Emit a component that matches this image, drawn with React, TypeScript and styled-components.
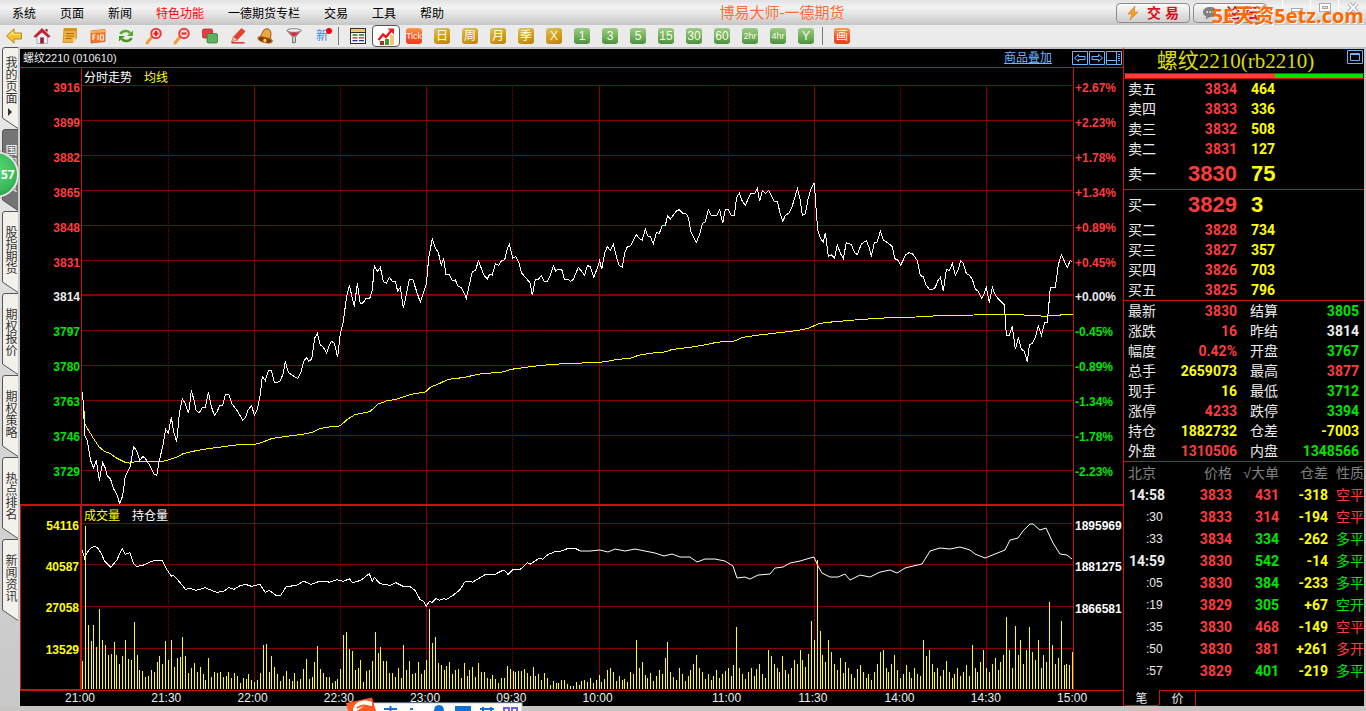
import React from "react";
import styled, { createGlobalStyle, css } from "styled-components";

const RED = "#ff3c3c";
const GREEN = "#00e600";
const YELLOW = "#ffff00";
const WHITE = "#ececec";
const FRAME = "#c8140a";
const GRID = "#860000";
const BLUE = "#6db3ff";

const ui = `"Liberation Sans", "Noto Sans CJK SC", sans-serif`;

const GlobalStyle = createGlobalStyle`
  * { box-sizing: border-box; }
  html, body { margin: 0; padding: 0; background: #c8c4c4; }
  body { font: 12px/16px ${ui}; color: #000; overflow: hidden; }
  button { font: inherit; color: inherit; margin: 0; padding: 0; border: 0; background: none; }
  table { border-collapse: collapse; border-spacing: 0; }
`;

/* ---------- shell ---------- */

const Shell = styled.div`
  position: relative;
  display: flex;
  flex-direction: column;
  height: 100vh;
  min-height: 700px;
  padding-bottom: 5px;
`;

const MenuBar = styled.header`
  display: flex;
  align-items: center;
  height: 25px;
  flex: none;
  background: linear-gradient(#e2e2e2, #f3f3f3 30%, #dedede 65%, #c6c6c6);
`;

const Menu = styled.nav`
  display: flex;
  gap: 24px;
  padding-left: 12px;
`;

const MenuItem = styled.button<{ $hot?: boolean }>`
  height: 24px;
  padding-top: 2px;
  white-space: nowrap;
  color: ${(p) => (p.$hot ? "#ff0000" : "#000")};
`;

const AppTitle = styled.h1`
  flex: 1;
  margin: 0;
  padding-left: 4px;
  text-align: center;
  font-size: 15px;
  line-height: 24px;
  font-weight: 400;
  color: #ff6c38;
`;

const Action = styled.button`
  display: flex;
  align-items: center;
  justify-content: center;
  gap: 8px;
  width: 74px;
  height: 20px;
  margin-right: 3px;
  border: 1px solid #8c8c8c;
  border-radius: 4px;
  background: linear-gradient(#fbfbfb, #e4e4e4 50%, #cfcfcf);
  font-size: 14px;
  font-weight: 700;
  color: #d8101c;
`;

const WindowButtons = styled.div`
  display: flex;
  align-self: flex-start;
  margin-left: 12px;
`;

const WindowButton = styled.button`
  display: flex;
  justify-content: center;
  width: 28px;
  height: 15px;
  padding-top: 2px;
  border-left: 1px solid #fff;
`;

const Watermark = styled.div`
  position: absolute;
  top: 2px;
  right: 2px;
  font: 700 20px/28px "Open Sans", "Noto Sans CJK SC", sans-serif;
  color: #ff6a00;
  text-shadow: 1px 1px 0 #fff;
`;

const ToolBar = styled.div`
  display: flex;
  align-items: center;
  height: 22px;
  flex: none;
  background: #ebebeb;
`;

const Tool = styled.button<{ $active?: boolean }>`
  display: flex;
  align-items: center;
  justify-content: center;
  width: 28px;
  height: 22px;
  ${(p) =>
    p.$active &&
    css`
      border: 1px solid #555;
      border-radius: 4px;
      background: #fff;
    `}
`;

const ToolGap = styled.span`
  width: 8px;
  height: 18px;
  border-left: 1px solid #7c7c7c;
  margin-left: 2px;
  margin-right: -2px;
`;

const tileColors = {
  gold: "linear-gradient(160deg, #d8c46a, #d2a21c 50%, #c08000)",
  green: "linear-gradient(#9ccc84, #6cae58 60%, #4c9040)",
  orange: "linear-gradient(#ff9c4c, #f4582c 50%, #e8401c)",
};

const Tile = styled.span<{ $tone: keyof typeof tileColors; $small?: boolean }>`
  display: flex;
  align-items: center;
  justify-content: center;
  width: 16px;
  height: 16px;
  border-radius: 3px;
  background: ${(p) => tileColors[p.$tone]};
  color: #fffbe8;
  font-size: ${(p) => (p.$small ? 9 : 12)}px;
  line-height: 16px;
  font-family: ${(p) => (p.$small ? `"Liberation Sans Narrow", ${ui}` : ui)};
  white-space: nowrap;
`;

const NewMark = styled.span`
  position: relative;
  font-size: 12px;
  line-height: 18px;
  color: #3c8ce8;
  &::after {
    content: "";
    position: absolute;
    top: 1px;
    right: -4px;
    width: 6px;
    height: 6px;
    border-radius: 50%;
    background: #ff0000;
  }
`;

const Workspace = styled.main`
  display: flex;
  flex: 1;
  min-height: 0;
  padding-right: 2px;
`;

/* ---------- left page tabs ---------- */

const SideBar = styled.aside`
  position: relative;
  width: 20px;
  flex: none;
  padding-left: 2px;
  background: linear-gradient(#eaeaea, #c8c8c8);
  border-right: 2px solid #cfcaca;
`;

const SideTab = styled.button<{ $active?: boolean }>`
  display: grid;
  width: 16px;
  height: 82px;
  color: ${(p) => (p.$active ? "#fff" : "#333")};
  > * {
    grid-area: 1 / 1;
  }
`;

const SideLabel = styled.span`
  display: flex;
  align-items: center;
  justify-content: center;
  gap: 4px;
  width: 16px;
  padding-bottom: 5px;
  writing-mode: vertical-rl;
  font-size: 12px;
  line-height: 14px;
`;

const Bubble = styled.div`
  position: absolute;
  left: -28px;
  top: 104px;
  width: 47px;
  height: 47px;
  padding-left: 27px;
  border: 2px solid #e4e4e4;
  border-radius: 50%;
  background: radial-gradient(circle at 50% 40%, #5cdc78, #38b858 62%, #1c8a3c);
  box-shadow: 0 0 2px #666;
  font: 700 12px/43px "Noto Sans", sans-serif;
  color: #fff;
`;

/* ---------- chart board ---------- */

const Board = styled.section`
  display: flex;
  flex-direction: column;
  flex: 1;
  min-width: 0;
  border-top: 2px solid #c6c2c2;
  background: #000;
  color: ${WHITE};
`;

const BoardHead = styled.div`
  display: flex;
  align-items: center;
  height: 19px;
  flex: none;
  padding-left: 3px;
  border-bottom: 1px solid ${FRAME};
`;

const Symbol = styled.span`
  flex: 1;
  font-size: 11px;
`;

const OverlayLink = styled.a`
  margin-right: 20px;
  color: ${BLUE};
  text-decoration: underline;
`;

const HeadButton = styled.button`
  display: block;
  width: 16px;
  height: 14px;
  margin-right: 1px;
`;

const Pane = styled.div<{ $share: number; $edge: number }>`
  display: grid;
  grid-template-columns: 62px minmax(0, 1fr) 50px;
  grid-template-rows: minmax(0, 1fr);
  flex: ${(p) => p.$share} 1 0;
  min-height: 0;
  border-bottom: ${(p) => p.$edge}px solid ${FRAME};
`;

const Axis = styled.div<{ $boxed?: boolean; $right?: boolean; $volume?: boolean }>`
  display: flex;
  flex-direction: column;
  grid-column: ${(p) => (p.$right ? 3 : 1)};
  grid-row: 1;
  padding: ${(p) => (p.$volume ? "12px 1px 6px" : "12px 1px 5px")};
  text-align: ${(p) => (p.$right ? "left" : "right")};
  border: 0 solid ${FRAME};
  border-width: ${(p) => (p.$boxed ? "0 2px 1px 1px" : p.$right ? "0 0 0 1px" : "0 1px 0 0")};
`;

const AxisLabel = styled.span<{ $color: string }>`
  flex: 1;
  font-weight: 700;
  line-height: 16px;
  color: ${(p) => p.$color};
`;

const Plot = styled.svg`
  grid-area: 1 / 2;
  display: block;
  width: 100%;
  height: 100%;
  path,
  polyline {
    fill: none;
    vector-effect: non-scaling-stroke;
    shape-rendering: crispEdges;
  }
`;

const Legend = styled.div`
  grid-area: 1 / 2;
  display: flex;
  align-self: start;
  gap: 12px;
  padding-top: 1px;
  padding-left: 2px;
  line-height: 18px;
`;

const LegendItem = styled.span<{ $color: string }>`
  color: ${(p) => p.$color};
`;

const TimeAxis = styled.div`
  display: flex;
  height: 15px;
  flex: none;
  padding-left: 45px;
  line-height: 15px;
`;

const TimeTick = styled.span<{ $span: number }>`
  flex: ${(p) => (p.$span ? `${p.$span} 1 0` : "0 0 66px")};
`;

/* ---------- quote panel ---------- */

const Quote = styled.aside`
  display: flex;
  flex-direction: column;
  width: 241px;
  flex: none;
  border-top: 2px solid #c6c2c2;
  border-left: 1px solid ${FRAME};
  background: #000;
  color: ${WHITE};
  font-size: 14px;
  line-height: 20px;
`;

const QuoteTitle = styled.div`
  display: flex;
  height: 25px;
  border-bottom: 1px solid ${FRAME};
  h2 {
    flex: 1;
    margin: 0;
    text-align: center;
    font: 400 21px/24px "Liberation Serif", "Noto Sans CJK SC", serif;
    color: #dcdc00;
  }
`;

const Balance = styled.div`
  display: flex;
  height: 5px;
  padding: 0 1px;
  border-bottom: 1px solid ${FRAME};
`;

const BalancePart = styled.span<{ $share: number; $color: string }>`
  flex: ${(p) => p.$share};
  background: ${(p) => p.$color};
`;

const Sheet = styled.table<{ $line?: boolean }>`
  width: 100%;
  table-layout: fixed;
  border-bottom: ${(p) => (p.$line ? `1px solid ${FRAME}` : "0")};
  th,
  td {
    padding: 0;
    text-align: left;
    font-weight: 400;
    white-space: nowrap;
  }
`;

const Row = styled.tr<{ $height: number }>`
  height: ${(p) => p.$height}px;
`;

const Name = styled.th<{ $indent: number }>`
  && {
    padding-left: ${(p) => p.$indent}px;
  }
`;

const Num = styled.td<{ $color: string; $size?: number; $left?: boolean }>`
  && {
    padding-left: ${(p) => (p.$left ? 14 : 0)}px;
    text-align: ${(p) => (p.$left ? "left" : "right")};
    font: 700 ${(p) => p.$size || 14}px/20px
      ${(p) => (p.$size ? `"Liberation Sans"` : "Roboto")}, sans-serif;
    color: ${(p) => p.$color};
  }
`;

const Head = styled.th<{ $right?: boolean; $indent?: number }>`
  && {
    padding-left: ${(p) => p.$indent || 0}px;
    text-align: ${(p) => (p.$right ? "right" : "left")};
    color: #808080;
  }
`;

const TimeCell = styled.td<{ $full: boolean }>`
  && {
    padding-left: ${(p) => (p.$full ? 5 : 22)}px;
    font: ${(p) => (p.$full ? "700 14px" : "400 12px")} / 20px
      ${(p) => (p.$full ? "Roboto" : `"Liberation Sans"`)}, sans-serif;
  }
`;

const Kind = styled.td<{ $color: string }>`
  && {
    padding-left: 8px;
    color: ${(p) => p.$color};
  }
`;

const TabStrip = styled.div`
  display: flex;
  height: 16px;
  margin-top: auto;
  font-size: 12px;
  line-height: 14px;
`;

const Tab = styled.button<{ $active?: boolean }>`
  width: 36px;
  padding-top: ${(p) => (p.$active ? 2 : 1)}px;
  border: 0 solid ${FRAME};
  border-width: ${(p) => (p.$active ? "0 1px 1px 0" : "1px 1px 0 0")};
  border-radius: ${(p) => (p.$active ? "0 0 3px 3px" : "0")};
`;

const TabRest = styled.span`
  flex: 1;
  border-top: 1px solid ${FRAME};
`;

const ImeBar = styled.div`
  position: absolute;
  left: 345px;
  bottom: 0;
  width: 178px;
  height: 14px;
  overflow: hidden;
`;

/* ---------- data ---------- */

const TICKS: [string, number][] = [
  ["21:00", 30], ["21:30", 30], ["22:00", 30], ["22:30", 30], ["23:00", 30], ["09:30", 30],
  ["10:00", 45], ["11:00", 30], ["11:30", 30], ["14:00", 30], ["14:30", 30], ["15:00", 0],
];

const PRICES = [3916, 3899, 3882, 3865, 3848, 3831, 3814, 3797, 3780, 3763, 3746, 3729];
const PERCENTS = ["+2.67%", "+2.23%", "+1.78%", "+1.34%", "+0.89%", "+0.45%", "+0.00%", "-0.45%", "-0.89%", "-1.34%", "-1.78%", "-2.23%"];

/* Each trace is cut into trading stretches with their own origin and unit; the plot's unit is a third of a pixel. */
type Stretch = { x: number; y: number; unit?: number; points: string };

const priceTrace: Stretch[] = [
  { x: -6, y: 486, points: "7,487 10,520 13,590 14,617 22,632 32,692 41,715 49,692 58,752 68,698 76,715 82,738 92,748 100,775 110,793 119,821 128,798 136,738 150,712 161,650 170,662 179,692 188,680 195,684 210,708 222,732 230,737 238,692 248,650 257,598 265,610 274,562 281,605 290,637 298,550 307,506 316,522 326,550 334,482 342,510 348,540 357,550 368,532 376,532 385,487 394,530 403,556 412,544 419,526 428,526 436,493 446,493 456,522 470,540 488,570 496,564 504,540 515,527 523,556 532,538 540,500 547,440 556,452 565,422 574,422 583,458 592,458 601,452 610,430 616,394 625,428 640,438 653,445 662,430 670,398 679,382 686,394 695,388 704,325 712,310 721,345 730,352 740,370 748,346 754,334 763,340 773,382 781,310 790,275 799,205 808,166 817,205 823,230 832,160 841,222 850,218 858,206 869,206 877,180 883,106 892,124 901,112 910,155 919,160 928,142 937,154 946,154 953,184 961,172 970,235 979,195 988,148 998,148 1010,185 1021,217 1030,188 1039,163 1046,85 1057,25" },
  { x: 1014, y: 306, points: "37,205 44,230 55,248 64,286 71,266 78,314 88,314 97,332 106,330 115,350 124,352 139,385 148,345 157,304 167,302 175,272 185,298 193,318 202,327 209,313 217,315 226,281 236,286 245,272 254,270 262,236 268,224 278,264 287,260 296,276 304,308 316,322 330,338 337,376 346,328 355,328 364,316 373,334 382,334 391,316 400,287 407,303 416,298 425,298 433,328 443,328 452,334 460,328 475,292 484,303 494,316 502,287 511,290 521,322 530,300 539,272 545,298 554,250 562,230 571,242 580,224 589,260 597,286 607,292 614,250 622,230 632,228 649,194 658,206 667,210 676,176 683,198 691,200 700,222 709,188 718,190 727,166 736,166 743,137 751,148 768,124 778,119 788,130 797,130 805,142 812,184 829,217 838,196 847,160 856,155 865,119 874,136 890,136 899,119 908,160 916,119 925,119 934,136 943,136 950,82 958,70 967,94 976,106 992,70 1004,70 1012,56 1019,94 1027,62 1036,70 1046,62 1062,94 1073,96 1080,130 1088,154 1096,137 1106,130 1115,114 1124,84 1132,56 1140,88 1147,136 1156,132 1164,88 1173,56 1183,38" },
  { x: 2154, y: 306, points: "43,38 47,100 53,180 61,205 70,217 76,188 85,260 94,254 104,265 112,224 121,250 130,265 139,218 154,224 164,248 172,254 184,222 199,212 207,232 214,260 223,218 232,216 241,182 250,210 265,220 277,230 284,266 293,270 302,286 310,270 317,254 328,248 338,252 352,272 361,317 370,320 378,345 388,358 398,358 406,352 414,332 421,322 430,364 439,298 448,302 457,281 466,317 475,298 482,272 490,280 499,311 508,316 517,328 526,358 535,364 545,385 552,372 559,352 568,398 577,352 586,376 600,392 613,404 619,496 628,496 637,470 646,538 655,502 664,538 673,544 682,575 688,525 697,520 707,500 715,469 724,496 734,457 742,457 751,352 766,352 775,285 784,254 793,274 802,292 811,272 817,278" },
];

const averageTrace: Stretch[] = [
  { x: -6, y: 486, points: "10,510 13,560 14,582 25,600 40,625 58,652 75,665 90,670 105,682 135,697 152,700 165,695 245,695 265,690 290,682 310,671 345,663 385,656 440,649 470,645 525,643 545,638 575,626 620,619 670,613 700,606 720,596 750,591 780,588 800,570 825,554 870,545 895,522 920,513 945,509 990,494 1037,486 1050,472 1080,460" },
  { x: 1014, y: 306, points: "60,640 85,628 130,623 180,612 250,606 275,598 340,589 400,583 470,580 550,576 590,569 635,564 655,556 690,550 735,546 755,539 810,532 860,524 890,517 945,513 965,503 1010,496 1080,488 1130,482 1165,475 1200,460" },
  { x: 2154, y: 306, points: "60,461 75,458 130,453 190,448 240,445 290,442 360,441 430,436 545,435 550,433 640,433 700,437 740,439 745,436 780,436 785,433 820,433" },
];

const interestTrace: Stretch[] = [
  { x: -6, y: -3, points: "7,136 14,160 22,142 31,130 42,124 52,128 62,142 74,168 92,187 110,166 127,130 136,148 150,143 160,175 170,184 188,181 220,167 247,166 262,196 274,213 280,211 300,232 316,253 330,250 348,256 375,248 410,262 432,258 446,248 462,253 480,242 497,238 515,244 540,238 556,262 568,256 588,271 602,271 618,246 655,239 670,228 692,238 715,230 750,231 772,224 790,229 808,221 818,233 842,226 868,206 877,229 883,217 900,236 930,241 948,233 968,243 988,243 1005,256 1020,283 1030,288 1039,304 1048,288 1056,292 1068,280 1078,286 1090,281 1100,283 1120,270 1140,254 1155,230 1178,231 1215,209 1245,208 1268,196 1275,197 1284,208 1298,194 1322,192 1342,173 1352,177 1375,161 1388,162 1405,148 1425,140 1440,139 1465,130 1485,130 1500,137" },
  { x: -246, y: -1518, unit: 3, points: "580,551 590,551 600,550 608,552 615,549 625,551 635,549 645,551 655,553 664,556 672,554 680,557 690,557 697,562 705,559 715,559 725,561 733,566 737,578 745,577 750,579 758,575 770,574 775,568 783,567 790,563 800,561 810,558 814,557 818,566 822,573 830,577 838,577 845,574 850,580 860,575 870,577 880,572 890,570 897,573 905,568 913,566 922,564 930,551 940,548 950,549 960,547 970,550 975,554 985,558 995,554 1005,550 1010,540 1018,538 1023,531 1030,524 1033,524 1040,530 1046,528 1053,543 1060,554 1067,555 1072,559" },
];

/* Bar tops by the minute: the night session in plot units, the day session in whole pixels above its base line. */
const NIGHT_TOPS = [
  468, 63, 360, 408, 360, 426, 312, 405, 420, 450, 447, 411, 450, 477, 453, 405, 462, 465, 351, 450, 495, 498, 516, 513, 495, 500, 471, 453, 477, 408,
  465, 405, 486, 459, 456, 396, 453, 504, 489, 474, 501, 486, 507, 525, 459, 516, 501, 504, 501, 516, 513, 501, 519, 504, 513, 534, 519, 522, 507, 525,
  531, 525, 504, 420, 417, 501, 453, 486, 507, 528, 513, 498, 522, 528, 504, 528, 522, 492, 462, 522, 516, 471, 423, 492, 504, 516, 516, 534, 528, 522,
  492, 390, 381, 432, 438, 495, 489, 465, 531, 498, 495, 468, 381, 444, 426, 468, 468, 504, 504, 516, 489, 519, 420, 495, 468, 507, 504, 471, 507, 495,
  465, 312, 414, 396, 474, 480, 495, 483, 471, 507, 495, 492, 519, 474, 513, 495, 486, 516, 474, 501, 501, 519, 522, 510, 522, 534, 519, 519, 483, 492,
  498, 501, 498, 498, 492, 504, 513, 486, 513, 507, 525, 504, 519, 540, 528, 534, 534, 525, 525, 537, 543, 543, 531, 540,
];
const DAY_BASE = 689;
const DAY_TOPS = [
  681, 680, 682, 678, 683, 680, 675, 682, 679, 670, 668, 672, 681, 676, 680, 679, 682, 672, 674, 640, 668, 662, 675, 678, 673, 681, 676, 670, 674, 658,
  642, 672, 677, 680, 668, 674, 681, 676, 670, 664, 655, 668, 672, 679, 674, 680, 676, 670, 678, 674, 671, 668, 676, 665, 627, 668, 674, 679, 672, 668,
  676, 669, 664, 674, 678, 650, 656, 664, 668, 672, 656, 670, 674, 668, 660, 664, 650, 660, 667, 654, 621, 640, 560, 631, 655, 662, 640, 652, 664, 670,
  658, 673, 662, 668, 674, 678, 669, 665, 672, 678, 674, 680, 672, 664, 652, 650, 668, 672, 664, 655, 670, 678, 674, 665, 672, 678, 668, 674, 676, 640,
  656, 650, 664, 672, 668, 676, 670, 661, 672, 678, 674, 668, 676, 672, 665, 676, 645, 668, 672, 662, 650, 668, 672, 664, 658, 670, 662, 655, 617, 650,
  668, 626, 655, 640, 664, 650, 627, 652, 660, 640, 668, 655, 662, 602, 645, 664, 658, 621, 665, 664, 665, 652,
];
const VOLUME_TOPS = [...NIGHT_TOPS, ...DAY_TOPS.map((y) => 552 - (DAY_BASE - y) * 3)];

const ASKS: [string, number, number][] = [["卖五", 3834, 464], ["卖四", 3833, 336], ["卖三", 3832, 508], ["卖二", 3831, 127], ["卖一", 3830, 75]];
const BIDS: [string, number, number][] = [["买一", 3829, 3], ["买二", 3828, 734], ["买三", 3827, 357], ["买四", 3826, 703], ["买五", 3825, 796]];

const STATS: [string, string, string, string, string, string][] = [
  ["最新", "3830", RED, "结算", "3805", GREEN],
  ["涨跌", "16", RED, "昨结", "3814", WHITE],
  ["幅度", "0.42%", RED, "开盘", "3767", GREEN],
  ["总手", "2659073", YELLOW, "最高", "3877", RED],
  ["现手", "16", YELLOW, "最低", "3712", GREEN],
  ["涨停", "4233", RED, "跌停", "3394", GREEN],
  ["持仓", "1882732", YELLOW, "仓差", "-7003", YELLOW],
  ["外盘", "1310506", RED, "内盘", "1348566", GREEN],
];

const TRADES: [string, number, number, string, string, string][] = [
  ["14:58", 3833, 431, "-318", "空平", RED],
  [":30", 3833, 314, "-194", "空平", RED],
  [":33", 3834, 334, "-262", "多平", GREEN],
  ["14:59", 3830, 542, "-14", "多平", GREEN],
  [":05", 3830, 384, "-233", "多平", GREEN],
  [":19", 3829, 305, "+67", "空开", GREEN],
  [":35", 3830, 468, "-149", "空平", RED],
  [":50", 3830, 381, "+261", "多开", RED],
  [":57", 3829, 401, "-219", "多平", GREEN],
];

const MENUS = ["系统", "页面", "新闻", "特色功能", "一德期货专栏", "交易", "工具", "帮助"];
const PAGES = ["我的页面", "国内期货", "股指期货", "期权报价", "期权策略", "热点排名", "新闻资讯"];

/* ---------- toolbar drawings ---------- */

const Glyph = ({ children }: { children: React.ReactNode }) => (
  <svg width="18" height="18" viewBox="0 0 18 18" aria-hidden="true">{children}</svg>
);

const Magnifier = ({ plus }: { plus?: boolean }) => (
  <Glyph>
    <path d="M2 16l5-6" stroke="#f0a030" strokeWidth="3" strokeLinecap="round" />
    <circle cx="11" cy="6.5" r="4.8" fill="#ffd8d8" stroke="#e84040" strokeWidth="2" />
    <path d={plus ? "M8.5 6.5h5M11 4v5" : "M8.5 6.5h5"} stroke="#e02020" strokeWidth="2" />
  </Glyph>
);

const DRAWINGS: [string, React.ReactNode][] = [
  ["后退", <Glyph><path d="M1.5 9L9 1.800V6h7.500v6H9v4.200z" fill="#f6c22c" stroke="#b88a18" strokeLinejoin="round" /><path d="M4 8.500L8 5v2.500h7" stroke="#fff0a0" fill="none" /></Glyph>],
  ["首页", <Glyph><path d="M4 8v8.500h10.500V8L9 3.500z" fill="#e8ecf4" stroke="#9098a8" strokeWidth=".7" /><path d="M.8 9.500L9 1.500l8.200 8-2 .8L9 5l-6.200 5.300z" fill="#d81830" stroke="#901020" strokeWidth=".6" /><path d="M12.500 2h2v3.500l-2-2z" fill="#a01828" /><path d="M7.200 10.500h3.600v6H7.200z" fill="#902030" /></Glyph>],
  ["便笺", <Glyph><path d="M3 1.500h12.500v10L12 15.500H2z" fill="#f0b040" stroke="#c88820" strokeWidth=".7" /><path d="M3 1.500h12.500v2.500H3z" fill="#d89020" /><path d="M5 6.500h8M5 9h8M4.500 11.500h6" stroke="#a87010" /><path d="M15.500 11.500H12v4z" fill="#ffe0a0" /></Glyph>],
  ["F10", <Glyph><path d="M2 4l14-1.500v12L2 16z" fill="#f07830" stroke="#c85010" strokeWidth=".7" /><path d="M2 4l14-1.500v2.500L2 6.500z" fill="#ffb050" /><path d="M4 13V8h2.500M4 10.500h2M9 8v5M11.500 8h3v5h-3z" stroke="#fff4e0" strokeWidth="1.200" fill="none" /></Glyph>],
  ["刷新", <Glyph><path d="M3.500 7C5 3.500 11 3 13 6" stroke="#58a82c" strokeWidth="2.600" fill="none" /><path d="M16 3.500v5.500h-6z" fill="#58a82c" /><path d="M14.500 11C13 14.500 7 15 5 12" stroke="#489820" strokeWidth="2.600" fill="none" /><path d="M2 14.500V9h6z" fill="#489820" /></Glyph>],
  ["放大", <Magnifier plus />],
  ["缩小", <Magnifier />],
  ["叠加", <Glyph><rect x="1.500" y="2" width="10" height="9" rx="1.500" fill="#e83c3c" stroke="#a82020" strokeWidth=".7" /><rect x="6" y="6.500" width="10.500" height="9.500" rx="1.500" fill="#60b060" stroke="#307030" strokeWidth=".7" /></Glyph>],
  ["画线", <Glyph><path d="M2.500 15.800h13" stroke="#e03030" strokeWidth="1.500" /><path d="M12.500 1l4 3.500-8 8.500-4-3.500z" fill="#e84030" /><path d="M4.500 9.500l4 3.500-6 2z" fill="#f0c888" stroke="#804018" strokeWidth=".5" /></Glyph>],
  ["预警", <Glyph><g transform="rotate(14 9 9)"><path d="M9 1.500c3 .5 4.500 3 4.500 6 0 2 .8 3.500 3 5H1.500c2.200-1.500 3-3 3-5 0-3 1.500-5.500 4.500-6z" fill="#f0a840" stroke="#804010" strokeWidth=".8" /><ellipse cx="9" cy="13" rx="7.200" ry="2.800" fill="#7c3c10" stroke="#c87820" /><circle cx="9" cy="13.500" r="1.700" fill="#f8d060" /></g></Glyph>],
  ["筛选", <Glyph><path d="M2 3.500L7.500 10v6l3-.5V10L16 3.500z" fill="#c8ccd0" stroke="#606468" strokeWidth=".8" /><ellipse cx="9" cy="3.500" rx="7" ry="1.800" fill="#f4f4f4" stroke="#606468" strokeWidth=".8" /><path d="M4 5.500h10L9 10z" fill="#e02838" /></Glyph>],
];

const Sheets = () => (
  <Glyph>
    <rect x="1.500" y="1.500" width="15" height="15" fill="#fff" stroke="#303030" />
    <path d="M2 3.500h14" stroke="#f0b860" strokeWidth="2.500" />
    <path d="M2 5.500h14" stroke="#303030" />
    <path d="M3.500 8h5M10 8h5" stroke="#108010" strokeWidth="1.300" />
    <path d="M3.500 10.800h5M10 10.800h5" stroke="#c02020" strokeWidth="1.300" />
    <path d="M3.500 13.600h5M10 13.600h5" stroke="#2030a0" strokeWidth="1.300" />
  </Glyph>
);

const TrendIcon = () => (
  <Glyph>
    <path d="M3 14h4v4H3z" fill="#a83020" /><path d="M8 12h4v6H8z" fill="#3c9830" /><path d="M13 8h4v10h-4z" fill="#f0c878" />
    <path d="M1.500 13L6 7.500l3 2.500 5-6" stroke="#f01818" strokeWidth="2.400" fill="none" /><path d="M10.500 1.500H17v6z" fill="#f01818" />
  </Glyph>
);

const TILES: [string, keyof typeof tileColors, boolean?][] = [
  ["Tick", "orange", true], ["日", "gold"], ["周", "gold"], ["月", "gold"], ["季", "gold"], ["X", "gold"],
  ["1", "green"], ["3", "green"], ["5", "green"], ["15", "green"], ["30", "green"], ["60", "green"],
  ["2hr", "green", true], ["4hr", "green", true], ["Y", "green"],
];

/* ---------- charts ---------- */

const W = 2973;
const axisColor = (i: number) => (i < 6 ? RED : i === 6 ? WHITE : GREEN);

const Trace = ({ parts, color }: { parts: Stretch[]; color: string }) => (
  <>
    {parts.map((s) => (
      <g key={s.x} transform={`translate(${s.x} ${s.y}) scale(${s.unit || 1})`}>
        <polyline points={s.points} stroke={color} strokeWidth="1" />
      </g>
    ))}
  </>
);

const TimeGrid = ({ top, bottom }: { top: number; bottom: number }) => {
  let minutes = 0;
  return (
    <>
      {TICKS.slice(0, -1).map(([label, span], i) => {
        const x = (W * minutes) / 345;
        minutes += span;
        if (!i) return null;
        const solid = ["22:00", "23:00", "10:00", "11:30", "14:30"].includes(label);
        return <path key={label} d={`M${x} ${top}V${bottom}`} stroke={GRID} strokeWidth="1" strokeDasharray={solid ? undefined : "1 1"} />;
      })}
    </>
  );
};

const PricePlot = () => (
  <Plot viewBox={`0 0 ${W} 1308`} preserveAspectRatio="none" role="img" aria-label="分时走势">
    {PRICES.map((p, i) => (
      <path key={p} d={`M0 ${i === 6 ? 681 : 53 + i * 105}H${W}`} stroke={GRID} strokeWidth={i === 6 ? 2 : 1} />
    ))}
    <TimeGrid top={51} bottom={1308} />
    <Trace parts={averageTrace} color={YELLOW} />
    <Trace parts={priceTrace} color="#fff" />
  </Plot>
);

const VolumePlot = () => (
  <Plot viewBox={`0 0 ${W} 552`} preserveAspectRatio="none" role="img" aria-label="成交量">
    <path d={`M0 52H${W}M0 176H${W}M0 301H${W}M0 427H${W}`} stroke={GRID} strokeWidth="1" />
    <TimeGrid top={0} bottom={552} />
    <Trace parts={interestTrace} color="#fff" />
    <path
      d={VOLUME_TOPS.map((top, i) => `M${Math.round(1 + i * 8.61)} ${top - 3}V549`).join("")}
      stroke={YELLOW}
      strokeWidth="1"
    />
  </Plot>
);

const Depth = ({ rows }: { rows: [string, number, number][] }) => (
  <Sheet $line>
    <colgroup><col width="60" /><col width="53" /><col /></colgroup>
    <tbody>
      {rows.map(([name, price, lots]) => {
        const best = name.endsWith("一");
        return (
          <Row key={name} $height={best ? 30 : 20}>
            <Name $indent={4}>{name}</Name>
            <Num $color={RED} $size={best ? 22 : undefined}>{price}</Num>
            <Num $color={YELLOW} $size={best ? 22 : undefined} $left>{lots}</Num>
          </Row>
        );
      })}
    </tbody>
  </Sheet>
);

export default function App() {
  return (
    <Shell>
      <GlobalStyle />
      <MenuBar>
        <Menu>
          {MENUS.map((m) => <MenuItem key={m} $hot={m === "特色功能"}>{m}</MenuItem>)}
        </Menu>
        <AppTitle>博易大师-一德期货</AppTitle>
        <Action>
          <svg width="12" height="16" viewBox="0 0 12 16" aria-hidden="true"><path d="M8 1L1 9h4l-2 6 8-8H7z" fill="#ffa020" stroke="#c87820" strokeWidth=".6" /></svg>
          交 易
        </Action>
        <Action>
          <svg width="16" height="14" viewBox="0 0 16 14" aria-hidden="true"><path d="M8 1c4 0 7 2 7 5.200S12 11 8 11l-4.500 2.500.8-3C2 9.500 1 8 1 6.200 1 3 4 1 8 1z" fill="#808080" /><path d="M4.500 6h1.500M7.500 6H9M10.500 6H12" stroke="#fff" strokeWidth="1.500" /></svg>
          论 坛
        </Action>
        <WindowButtons>
          <WindowButton aria-label="最小化"><svg width="14" height="12"><rect x="1.500" y="6.500" width="11" height="3" fill="#fff" stroke="#a8a8a8" /></svg></WindowButton>
          <WindowButton aria-label="最大化"><svg width="14" height="12"><rect x="1.500" y="1.500" width="11" height="8" fill="#fff" stroke="#a8a8a8" /><rect x="4.500" y="4.500" width="5" height="2" fill="#ddd" stroke="#a8a8a8" /></svg></WindowButton>
          <WindowButton aria-label="关闭"><svg width="14" height="12"><path d="M3 1.500l8 8.500M11 1.500L3 10" stroke="#a0a0a0" strokeWidth="4" /><path d="M3 1.500l8 8.500M11 1.500L3 10" stroke="#fff" strokeWidth="2" /></svg></WindowButton>
        </WindowButtons>
      </MenuBar>
      <ToolBar>
        {DRAWINGS.map(([label, icon]) => <Tool key={label} aria-label={label}>{icon}</Tool>)}
        <Tool><NewMark>新</NewMark></Tool>
        <ToolGap />
        <Tool aria-label="报价"><Sheets /></Tool>
        <Tool $active aria-label="分时"><TrendIcon /></Tool>
        {TILES.map(([label, tone, small]) => (
          <Tool key={label}><Tile $tone={tone} $small={small}>{label}</Tile></Tool>
        ))}
        <ToolGap />
        <Tool><Tile $tone="orange">画</Tile></Tool>
      </ToolBar>
      <Workspace>
        <SideBar>
          {PAGES.map((page, i) => (
            <SideTab key={page} $active={i === 1}>
              <svg width="16" height="82" aria-hidden="true">
                <path d="M16 .5H3Q.5.5.5 3V71L16 81.500" fill={i === 1 ? "#747474" : "#f2f1ec"} stroke="#555" />
              </svg>
              <SideLabel>
                {page}
                {i === 0 && <svg width="6" height="8" aria-hidden="true"><path d="M1 0v8l4-4z" fill="#333" /></svg>}
              </SideLabel>
            </SideTab>
          ))}
          <Bubble>57</Bubble>
        </SideBar>
        <Board>
          <BoardHead>
            <Symbol>螺纹2210 (010610)</Symbol>
            <OverlayLink href="#overlay">商品叠加</OverlayLink>
            <HeadButton aria-label="上一个"><svg width="16" height="14"><path d="M.5.500h15v13H.5zM2.500 7L6.500 3.500v2h6.500v3H6.500v2z" fill="none" stroke={BLUE} /></svg></HeadButton>
            <HeadButton aria-label="下一个"><svg width="16" height="14"><path d="M.5.500h15v13H.5zM13.500 7L9.500 3.500v2H3v3h6.500v2z" fill="none" stroke={BLUE} /></svg></HeadButton>
            <HeadButton aria-label="布局"><svg width="16" height="14"><path d="M.5.500h15v13H.5zM.5 9.500h10M10.500.5v13M12 3.500h2M12 5.500h2M12 7.500h2M12 9.500h2" fill="none" stroke={BLUE} /></svg></HeadButton>
          </BoardHead>
          <Pane $share={438} $edge={2}>
            <Axis>{PRICES.map((p, i) => <AxisLabel key={p} $color={axisColor(i)}>{p}</AxisLabel>)}</Axis>
            <PricePlot />
            <Legend>
              <LegendItem $color="#fff">分时走势</LegendItem>
              <LegendItem $color={YELLOW}>均线</LegendItem>
            </Legend>
            <Axis $right>{PERCENTS.map((p, i) => <AxisLabel key={p} $color={axisColor(i)}>{p}</AxisLabel>)}</Axis>
          </Pane>
          <Pane $share={185} $edge={1}>
            <Axis $boxed $volume>{[54116, 40587, 27058, 13529].map((v) => <AxisLabel key={v} $color={YELLOW}>{v}</AxisLabel>)}</Axis>
            <VolumePlot />
            <Legend>
              <LegendItem $color={YELLOW}>成交量</LegendItem>
              <LegendItem $color="#fff">持仓量</LegendItem>
            </Legend>
            <Axis $right $volume>{["1895969", "1881275", "1866581", ""].map((v) => <AxisLabel key={v} $color="#fff">{v}</AxisLabel>)}</Axis>
          </Pane>
          <TimeAxis>{TICKS.map(([label, span]) => <TimeTick key={label} $span={span}>{label}</TimeTick>)}</TimeAxis>
        </Board>
        <Quote>
          <QuoteTitle>
            <h2>螺纹2210(rb2210)</h2>
            <HeadButton aria-label="最大化"><svg width="16" height="14"><path d="M.5.500h15v13H.5zM3.500 3.500h9v7h-9zM3.500 4.500h9" fill="none" stroke={BLUE} /></svg></HeadButton>
          </QuoteTitle>
          <Balance>
            <BalancePart $share={150} $color={RED} />
            <BalancePart $share={88} $color={GREEN} />
          </Balance>
          <Depth rows={ASKS} />
          <Depth rows={BIDS} />
          <Sheet $line>
            <colgroup><col width="44" /><col width="69" /><col width="60" /><col width="62" /><col /></colgroup>
            <tbody>
              {STATS.map(([a, av, ac, b, bv, bc]) => (
                <Row key={a} $height={20}>
                  <Name $indent={4}>{a}</Name><Num $color={ac}>{av}</Num>
                  <Name $indent={13}>{b}</Name><Num $color={bc}>{bv}</Num><td />
                </Row>
              ))}
            </tbody>
          </Sheet>
          <Sheet>
            <colgroup><col width="50" /><col width="58" /><col width="47" /><col width="49" /><col /></colgroup>
            <thead>
              <Row $height={22}>
                <Head $indent={4}>北京</Head><Head $right>价格</Head><Head $right>√大单</Head><Head $right>仓差</Head><Head $indent={8}>性质</Head>
              </Row>
            </thead>
            <tbody>
              {TRADES.map(([time, price, lots, change, kind, color]) => (
                <Row key={time} $height={22}>
                  <TimeCell $full={time.length > 3}>{time}</TimeCell>
                  <Num $color={RED}>{price}</Num><Num $color={color}>{lots}</Num><Num $color={YELLOW}>{change}</Num>
                  <Kind $color={color}>{kind}</Kind>
                </Row>
              ))}
            </tbody>
          </Sheet>
          <TabStrip><Tab $active>笔</Tab><Tab>价</Tab><TabRest /></TabStrip>
        </Quote>
      </Workspace>
      <Watermark>5E天资5etz.com</Watermark>
      <ImeBar>
        <svg width="178" height="14" aria-hidden="true">
          <rect x="22" y="6" width="155" height="14" fill="#fff" stroke="#b8d0e8" />
          <path d="M1 6L27 .5l4 13.500H3z" fill="#f85c20" />
          <path d="M27 5C18 1 8 5 8 14h4c6-5 8-6 15-5z" fill="#fff" />
          <path d="M12 11c4-3 9-3 13-1" stroke="#f85c20" strokeWidth="2" fill="none" />
          <path d="M39 12h13M45.500 9v5M65 12h3M90 14c0-4 1-5 4-5s4 1 4 5zM111 10h14v4h-14zM135 12h14M138 10v4M146 10v4" stroke="#1470d8" strokeWidth="2" fill="#1470d8" />
          <path d="M159 14v-3h5v3M167 14v-3h5v3" stroke="#7060e8" strokeWidth="2" fill="none" />
        </svg>
      </ImeBar>
    </Shell>
  );
}
